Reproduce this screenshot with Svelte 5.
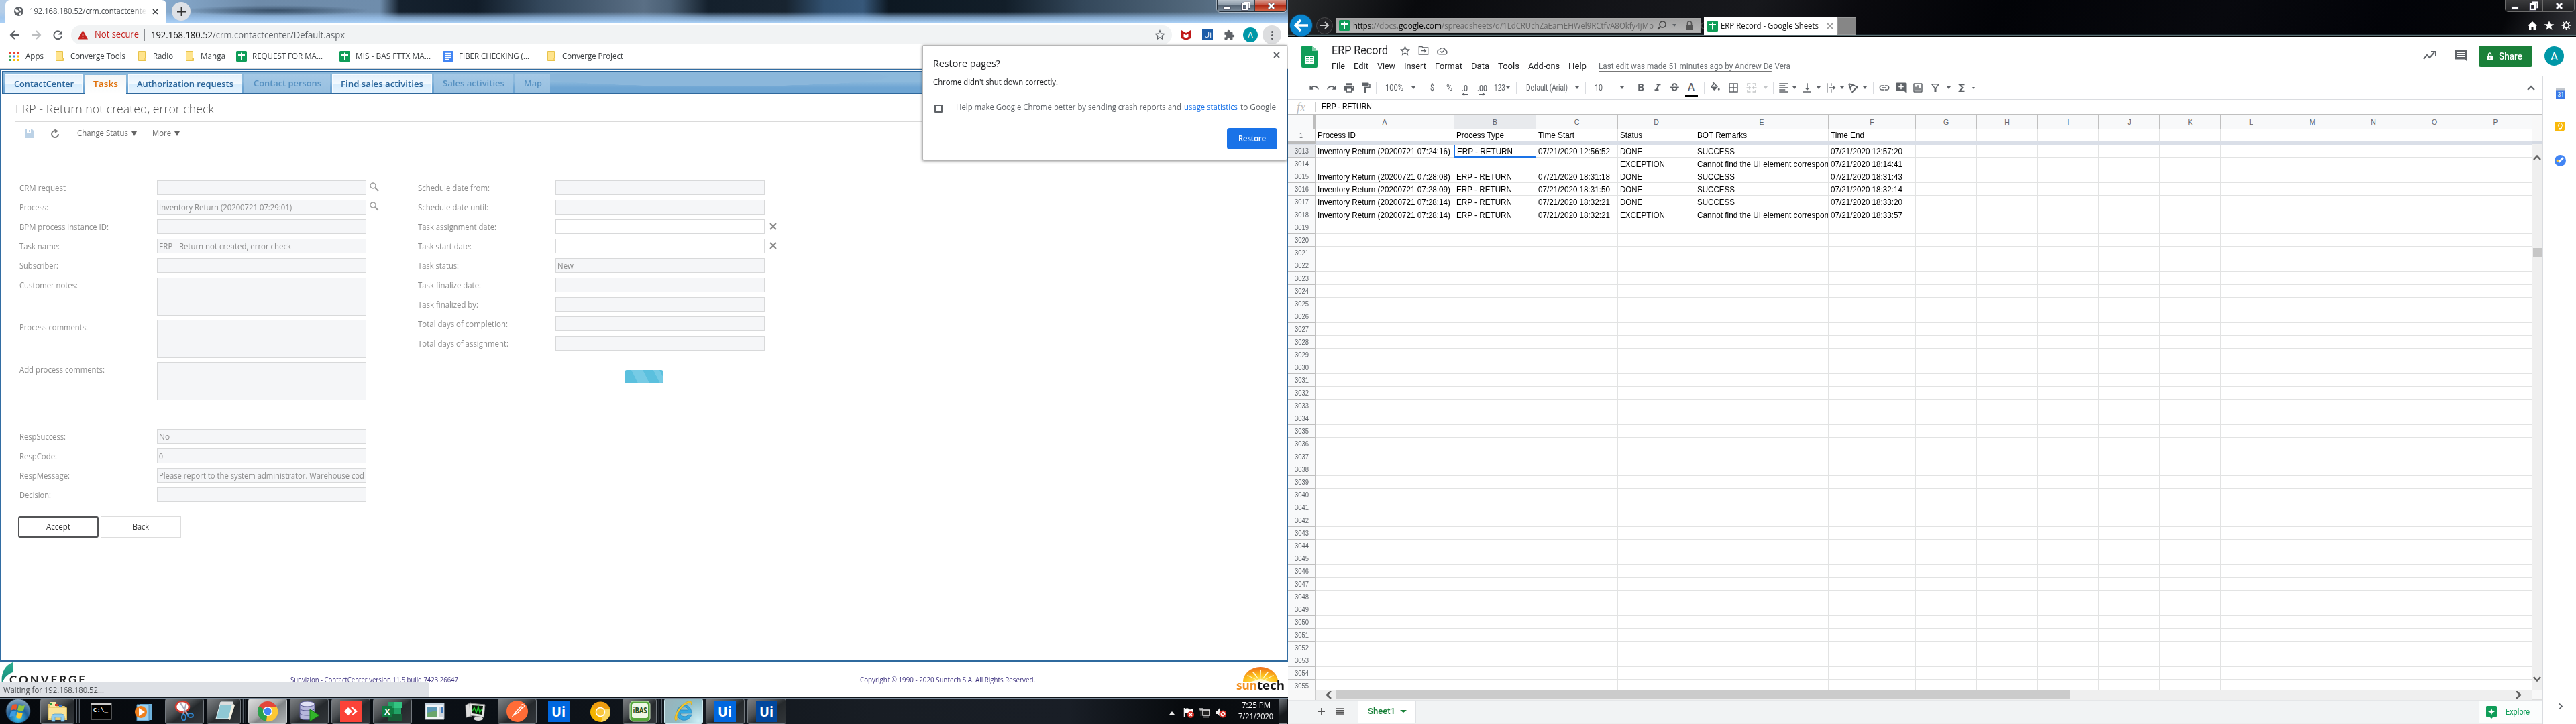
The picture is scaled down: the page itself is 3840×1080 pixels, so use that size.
<script>
  // Condenses or widens a line of text to the given width.
  function fit(node, w) {
    if (!w) return;
    const natural = node.getBoundingClientRect().width;
    node.style.transform = `scaleX(${w / natural})`;
    node.style.width = `${w}px`;
  }

  const bookmarks = [
    { kind: 'apps', name: 'Apps', w: 27, cell: 69 },
    { kind: 'folder', name: 'Converge Tools', w: 82, cell: 123 },
    { kind: 'folder', name: 'Radio', w: 30, cell: 71 },
    { kind: 'folder', name: 'Manga', w: 37, cell: 75 },
    { kind: 'gsheet', name: 'REQUEST FOR MA...', w: 105, cell: 154 },
    { kind: 'gsheet', name: 'MIS - BAS FTTX MA...', w: 112, cell: 154 },
    { kind: 'gdoc', name: 'FIBER CHECKING (...', w: 105, cell: 156 },
    { kind: 'folder', name: 'Converge Project', w: 91, cell: 130 }
  ];

  const tabs = [
    { name: 'ContactCenter', w: 116, t: 89, state: 'on' },
    { name: 'Tasks', w: 62, t: 37, state: 'current' },
    { name: 'Authorization requests', w: 170, t: 144, state: 'on' },
    { name: 'Contact persons', w: 128, t: 101, state: 'off' },
    { name: 'Find sales activities', w: 149, t: 123, state: 'on' },
    { name: 'Sales activities', w: 118, t: 92, state: 'off' },
    { name: 'Map', w: 52, t: 27, state: 'off' }
  ];

  const leftFields = [
    { label: 'CRM request', w: 69, find: true },
    { label: 'Process:', w: 43, value: 'Inventory Return (20200721 07:29:01)', vw: 198, find: true },
    { label: 'BPM process instance ID:', w: 133 },
    { label: 'Task name:', w: 60, value: 'ERP - Return not created, error check', vw: 197 },
    { label: 'Subscriber:', w: 58 },
    { label: 'Customer notes:', w: 87, tall: true },
    { label: 'Process comments:', w: 102, tall: true },
    { label: 'Add process comments:', w: 127, tall: true }
  ];
  const rightFields = [
    { label: 'Schedule date from:', w: 107 },
    { label: 'Schedule date until:', w: 105 },
    { label: 'Task assignment date:', w: 117, edit: true },
    { label: 'Task start date:', w: 80, edit: true },
    { label: 'Task status:', w: 61, value: 'New', vw: 24 },
    { label: 'Task finalize date:', w: 94 },
    { label: 'Task finalized by:', w: 90 },
    { label: 'Total days of completion:', w: 134 },
    { label: 'Total days of assignment:', w: 135 }
  ];
  const respFields = [
    { label: 'RespSuccess:', w: 69, value: 'No', vw: 16 },
    { label: 'RespCode:', w: 56, value: '0', vw: 6 },
    { label: 'RespMessage:', w: 75, value: 'Please report to the system administrator. Warehouse cod', vw: 306 },
    { label: 'Decision:', w: 47 }
  ];

  const apps = [
    ['explorer', 'stack'], ['cmd', ''], ['media', ''], ['snip', 'open'], ['notepad', 'stack'],
    ['chrome', 'lit'], ['db', 'open'], ['anydesk', 'open'], ['excel', 'open'], ['panel', ''],
    ['monitor', ''], ['postman', 'open'], ['ui', ''], ['canary', ''], ['ibas', 'stack'],
    ['ie', 'active'], ['ui', 'open'], ['uidark', 'open']
  ];

  const menus = [
    ['File', 20, 33], ['Edit', 22, 35], ['View', 27, 40], ['Insert', 33, 46], ['Format', 41, 54],
    ['Data', 27, 40], ['Tools', 32, 45], ['Add-ons', 47, 60], ['Help', 27, 45]
  ];

  const tools = [
    ['undo', 26], ['redo', 26], ['print', 25], ['paint', 25], ['|', 6], ['100%', 48, 27], ['v', 10],
    ['|', 12], ['$', 22, 6], ['%', 28, 9], ['.0', 18, 9], ['.00', 34, 15], ['123', 18, 17], ['v', 8],
    ['|', 16], ['Default (Arial)', 76, 62], ['v', 14], ['|', 10], ['10', 30, 12], ['v', 40],
    ['bold', 16], ['italic', 34], ['strike', 16], ['color', 34], ['|', 4], ['fill', 30],
    ['borders', 24], ['merge', 30], ['vlight', 12], ['|', 10], ['align', 22], ['v', 10],
    ['valign', 28], ['v', 6], ['wrap', 30], ['v', 4], ['rotate', 28], ['v', 8], ['|', 16],
    ['link', 18], ['comment', 32], ['chart', 18], ['filter', 34], ['v', 6], ['sigma', 32], ['vs', 4]
  ];
  const paths = {
    undo: 'M12.5 8c-2.65 0-5.05.99-6.9 2.6L2 7v9h9l-3.62-3.62c1.39-1.16 3.16-1.88 5.12-1.88 3.54 0 6.55 2.31 7.6 5.5l2.37-.78C21.08 11.03 17.15 8 12.5 8z',
    redo: 'M18.4 10.6C16.55 8.99 14.15 8 11.5 8c-4.65 0-8.58 3.03-9.96 7.22L3.9 16c1.05-3.19 4.05-5.5 7.6-5.5 1.95 0 3.73.72 5.12 1.88L13 16h9V7l-3.6 3.6z',
    print: 'M19 8H5c-1.66 0-3 1.34-3 3v6h4v4h12v-4h4v-6c0-1.66-1.34-3-3-3zm-3 11H8v-5h8v5zm3-7c-.55 0-1-.45-1-1s.45-1 1-1 1 .45 1 1-.45 1-1 1zm-1-9H6v4h12V3z',
    paint: 'M18 4V3c0-.55-.45-1-1-1H5c-.55 0-1 .45-1 1v4c0 .55.45 1 1 1h12c.55 0 1-.45 1-1V6h1v4H9v11c0 .55.45 1 1 1h2c.55 0 1-.45 1-1v-9h8V4h-3z',
    bold: 'M15.6 10.79c.97-.67 1.65-1.77 1.65-2.79 0-2.26-1.75-4-4-4H7v14h7.04c2.09 0 3.71-1.7 3.71-3.79 0-1.52-.86-2.82-2.15-3.42zM10 6.5h3c.83 0 1.5.67 1.5 1.5s-.67 1.5-1.5 1.5h-3v-3zm3.5 9H10v-3h3.5c.83 0 1.5.67 1.5 1.5s-.67 1.5-1.5 1.5z',
    italic: 'M10 4v3h2.21l-3.42 8H6v3h8v-3h-2.21l3.42-8H18V4z',
    strike: 'M7.24 8.75c-.26-.48-.39-1.03-.39-1.67 0-.61.13-1.16.4-1.67.26-.5.63-.93 1.11-1.29.48-.35 1.05-.63 1.7-.83.66-.19 1.39-.29 2.18-.29.81 0 1.54.11 2.21.34.66.22 1.23.54 1.69.94.47.4.83.88 1.08 1.43s.38 1.15.38 1.81h-3.01c0-.31-.05-.59-.15-.85-.09-.27-.24-.49-.44-.68-.2-.19-.45-.33-.75-.44-.3-.1-.66-.16-1.06-.16-.39 0-.74.04-1.03.13s-.53.21-.72.36c-.19.16-.34.34-.44.55-.1.21-.15.43-.15.66 0 .48.25.88.74 1.21.38.25.77.48 1.41.7H7.39c-.05-.08-.11-.17-.15-.25zM21 12v-2H3v2h9.62c.18.07.4.14.55.2.37.17.66.34.87.51s.35.36.43.57c.07.2.11.43.11.69 0 .23-.05.45-.14.66-.09.2-.23.38-.42.53-.19.15-.42.26-.71.35-.29.08-.63.13-1.01.13-.43 0-.83-.04-1.18-.13s-.66-.23-.91-.42c-.25-.19-.45-.44-.59-.75s-.25-.76-.25-1.21H6.4c0 .55.08 1.13.24 1.58s.37.85.65 1.21c.28.35.6.66.98.92.37.26.78.48 1.22.65.44.17.9.3 1.38.39.48.08.96.13 1.44.13.8 0 1.53-.09 2.18-.28s1.21-.45 1.67-.79c.46-.34.82-.77 1.07-1.27s.38-1.07.38-1.71c0-.6-.1-1.14-.31-1.61-.05-.11-.11-.23-.17-.33H21z',
    fill: 'M16.56 8.94L7.62 0 6.21 1.41l2.38 2.38-5.15 5.15c-.59.59-.59 1.54 0 2.12l5.5 5.5c.29.29.68.44 1.06.44s.77-.15 1.06-.44l5.5-5.5c.59-.58.59-1.53 0-2.12zM5.21 10L10 5.21 14.79 10H5.21zM19 11.5s-2 2.17-2 3.5c0 1.1.9 2 2 2s2-.9 2-2c0-1.33-2-3.5-2-3.5z',
    borders: 'M3 3v18h18V3H3zm8 16H5v-6h6v6zm0-8H5V5h6v6zm8 8h-6v-6h6v6zm0-8h-6V5h6v6z',
    merge: 'M3 3h7v2H5v3H3zM14 3h7v5h-2V5h-5zM3 16h2v3h5v2H3zM19 16h2v5h-7v-2h5zM2 11h5V8l4 4-4 4v-3H2zM22 11h-5V8l-4 4 4 4v-3h5z',
    align: 'M15 15H3v2h12v-2zm0-8H3v2h12V7zM3 13h18v-2H3v2zm0 8h18v-2H3v2zM3 3v2h18V3H3z',
    valign: 'M16 13h-3V3h-2v10H8l4 4 4-4zM4 19v2h16v-2H4z',
    wrap: 'M4 3h2v18H4zM12 3h2v6h-2zM12 15h2v6h-2zM8 11h9V8l5 4-5 4v-3H8z',
    rotate: 'M3 5l2-2 12 4-2 2-3-1-4 4 1 3-2 2zM6 6l1.500 4 2.500-2.600zM9 20L18 11l-2-2h6v6l-2-2-9 9z',
    link: 'M3.900 12c0-1.710 1.390-3.100 3.100-3.100h4V7H7c-2.760 0-5 2.240-5 5s2.240 5 5 5h4v-1.900H7c-1.710 0-3.100-1.390-3.100-3.100zM8 13h8v-2H8v2zm9-6h-4v1.900h4c1.710 0 3.100 1.390 3.100 3.100s-1.390 3.100-3.100 3.100h-4V17h4c2.760 0 5-2.240 5-5s-2.240-5-5-5z',
    comment: 'M22 4c0-1.100-.9-2-2-2H4c-1.100 0-2 .9-2 2v12c0 1.100.9 2 2 2h14l4 4V4zm-5 7h-4v4h-2v-4H7V9h4V5h2v4h4v2z',
    chart: 'M19 3H5c-1.100 0-2 .9-2 2v14c0 1.100.9 2 2 2h14c1.100 0 2-.9 2-2V5c0-1.100-.9-2-2-2zm0 16H5V5h14v14zM7 10h2v7H7zM11 7h2v10h-2zM15 13h2v4h-2z',
    filter: 'M3 4h18l-7 9v7h-4v-7zM7 6l5 6.500 5-6.500z',
    sigma: 'M18 4H6v2l6.500 6L6 18v2h12v-3h-7l5-5-5-5h7z'
  };

  const cols = 'ABCDEFGHIJKLMNOP'.split('');
  const head = [['Process ID', 57], ['Process Type', 71], ['Time Start', 54], ['Status', 33], ['BOT Remarks', 74], ['Time End', 50]];
  const id = (s) => [`Inventory Return (20200721 ${s})`, 198];
  const erp = ['ERP - RETURN', 83];
  const at = (s) => [`07/21/2020 ${s}`, 107];
  const done = ['DONE', 33];
  const exc = ['EXCEPTION', 67];
  const ok = ['SUCCESS', 56];
  const miss = ['Cannot find the UI element correspon', 196];
  const data = [
    [id('07:24:16'), erp, at('12:56:52'), done, ok, at('12:57:20')],
    [null, null, null, exc, miss, at('18:14:41')],
    [id('07:28:08'), erp, at('18:31:18'), done, ok, at('18:31:43')],
    [id('07:28:09'), erp, at('18:31:50'), done, ok, at('18:32:14')],
    [id('07:28:14'), erp, at('18:32:21'), done, ok, at('18:33:20')],
    [id('07:28:14'), erp, at('18:32:21'), exc, miss, at('18:33:57')]
  ];
  const rows = Array.from({ length: 43 }, (_, i) => ({ n: 3013 + i, cells: data[i] ?? [] }));
</script>

{#snippet t(text, w, cls = '')}<span class="t {cls}" use:fit={w}>{text}</span>{/snippet}

{#snippet sheetIcon(s)}
  <svg class="ico" width={s} height={s} viewBox="0 0 16 16"><rect width="16" height="16" rx="1.500" fill="#0f9d58" /><path d="M7 2.500h2V5h4v2H9v6.500H7V7H3V5h4z" fill="#fff" /></svg>
{/snippet}

{#snippet windowButtons(dark)}
  <div class="winbtns" class:dark>
    <span><svg width="12" height="14"><rect x="1" y="8" width="10" height="4" fill="#fff" stroke="#445" stroke-width=".8" /></svg></span>
    <span><svg width="14" height="14"><path d="M5 1h8v9h-2M2 4h7v8H2z" fill="none" stroke="#556" stroke-width="3.500" /><path d="M5 1.500h7.500V10M2 4h7v8H2z" fill="none" stroke="#fff" stroke-width="2" /></svg></span>
    <span class="close"><svg width="14" height="14"><path d="M3 3l8 8M11 3l-8 8" stroke="#445" stroke-width="4" /><path d="M3 3l8 8M11 3l-8 8" stroke="#fff" stroke-width="2.600" /></svg></span>
  </div>
{/snippet}

{#snippet field(f)}
  <div class="field" class:tall={f.tall}>
    <div class="label">{@render t(f.label, f.w)}</div>
    <div class="input" class:edit={f.edit}>{#if f.value}{@render t(f.value, f.vw)}{/if}</div>
    {#if f.find}
      <svg class="find" width="14" height="15" viewBox="0 0 14 15"><circle cx="5" cy="5" r="4" fill="none" stroke="#999" stroke-width="1.300" /><path d="M8 8l5 5" stroke="#999" stroke-width="2" /></svg>
    {:else if f.edit}
      <svg class="clear" width="11" height="11" viewBox="0 0 11 11"><path d="M1 1l9 9M10 1l-9 9" stroke="#8a8a8a" stroke-width="2" /></svg>
    {/if}
  </div>
{/snippet}

{#snippet appIcon(k)}
  <svg width="36" height="34" viewBox="0 0 36 34">
    {#if k === 'explorer'}
      <path d="M4 6h8l2 3h14l4 3v18H4z" fill="#e8c768" /><path d="M6 3h9v7H6z" fill="#f6e7a5" /><path d="M7 4h3v3H7z" fill="#2a9d3c" /><path d="M14 6h4v3h-4z" fill="#d43a2a" /><path d="M20 8h4v3h-4z" fill="#3476d0" /><path d="M4 11h27v17H4z" fill="#f9e398" stroke="#d9b850" /><path d="M9 32v-7q0-4 4-4h11q4 0 4 4v7h-5v-6h-9v6z" fill="#8fcdf0" stroke="#4a96c4" stroke-width=".7" />
    {:else if k === 'cmd'}
      <rect x="3" y="5" width="30" height="24" fill="#000" stroke="#999" /><path d="M3 5h30v3H3z" fill="#c9c9c9" /><text x="6" y="18" font-family="Liberation Mono" font-size="9" font-weight="bold" fill="#fff" textLength="22">C:\_</text>
    {:else if k === 'media'}
      <path d="M14 6h18v24H14z" fill="#6db1dc" /><path d="M9 7h18v24H9z" fill="#9ad0ef" stroke="#4b90bf" /><circle cx="15" cy="18" r="9" fill="#ef7f1c" /><path d="M12 12l9 6-9 6z" fill="#fff" />
    {:else if k === 'snip'}
      <ellipse cx="15" cy="10" rx="10" ry="8" fill="#fff" stroke="#d23b30" stroke-width="2.500" /><path d="M11 3l12 19M21 4l-5 18" stroke="#aab" stroke-width="2" /><ellipse cx="17" cy="26" rx="3" ry="4.500" fill="none" stroke="#2f86cf" stroke-width="2" /><ellipse cx="27" cy="23" rx="4" ry="3" fill="none" stroke="#2f86cf" stroke-width="2" />
    {:else if k === 'notepad'}
      <path d="M13 3h18l-6 25H6z" fill="#8fc8d4" stroke="#e8f3f5" /><path d="M13 3h18l-1 4H12z" fill="#ddd" /><path d="M31 5l3 3-7 22-3-2z" fill="#f3efe0" />
    {:else if k === 'chrome'}
      <circle cx="18" cy="17" r="15" fill="#e4463a" /><path d="M18 17L5 9.500A15 15 0 0 0 16 32z" fill="#2ba24c" /><path d="M18 17l-2 15A15 15 0 0 0 32 11H20z" fill="#fcc934" /><circle cx="18" cy="17" r="7" fill="#fff" /><circle cx="18" cy="17" r="5.500" fill="#4285f4" />
    {:else if k === 'db'}
      <path d="M4 6v20c0 5 22 5 22 0V6z" fill="#b7b7dc" stroke="#55558e" /><ellipse cx="15" cy="6" rx="11" ry="4" fill="#e0e0f4" stroke="#55558e" /><path d="M4 13c0 4 22 4 22 0M4 20c0 4 22 4 22 0" fill="none" stroke="#55558e" /><path d="M19 14l14 9-14 9z" fill="#33b52a" stroke="#187a14" />
    {:else if k === 'anydesk'}
      <rect x="2" y="1" width="32" height="32" fill="#fb4338" /><path d="M8 17l6-6 6 6-6 6zM18 11l3 0 7 6-7 6h-3l6-6z" fill="#fff" />
    {:else if k === 'excel'}
      <path d="M11 3h20v28H11z" fill="#21a366" /><path d="M21 3h11v9H21z" fill="#33c481" /><path d="M11 12h10v9H11z" fill="#107c41" /><path d="M11 21h21v10H11z" fill="#185c37" /><rect x="2" y="9" width="16" height="16" rx="1" fill="#107c41" /><text x="6" y="22" font-family="Open Sans" font-weight="bold" font-size="13" fill="#fff">X</text>
    {:else if k === 'panel'}
      <path d="M5 5h28v24H5z" fill="#f2f5f8" stroke="#aeb7c0" /><path d="M5 5h28v3H5z" fill="#c2d0dc" /><path d="M8 11h14v14H8z" fill="#5b97b5" /><path d="M8 19l14-3v9H8z" fill="#6aa56c" /><path d="M25 11h6v14h-6z" fill="#cdd3da" /><path d="M29 11h3v8h-3z" fill="#3a76ba" />
    {:else if k === 'monitor'}
      <path d="M3 8l8-4 2 20-9 2z" fill="#ddd" stroke="#888" /><path d="M9 5l23 2-2 19-20-3z" fill="#e4e4e4" stroke="#888" /><path d="M12 8l17 1-2 13-14-2z" fill="#0a1a0a" /><path d="M13 17l3-6 3 8 3-9 2 9 3-5" fill="none" stroke="#1fc32e" stroke-width="1.500" /><ellipse cx="22" cy="28" rx="7" ry="3" fill="#ddd" />
    {:else if k === 'postman'}
      <circle cx="18" cy="17" r="16" fill="#ff6c37" /><path d="M9 26l6-8 3 2z" fill="#fff" /><path d="M15 19l9-10M18 20l9-10" stroke="#fff" stroke-width="1.300" /><circle cx="26" cy="9" r="2.500" fill="none" stroke="#fff" />
    {:else if k === 'ui' || k === 'uidark'}
      <rect x="2" y="1" width="32" height="32" fill={k === 'ui' ? '#0067df' : '#01479d'} /><text x="7" y="25" font-family="Open Sans" font-weight="bold" font-size="22" textLength="21" lengthAdjust="spacingAndGlyphs" fill="#fff">Ui</text>
    {:else if k === 'canary'}
      <circle cx="18" cy="18" r="15" fill="#f4b400" /><path d="M18 18L5 10A15 15 0 0 1 32 12z" fill="#ee9c0f" /><path d="M24 14h8a15 15 0 0 1-13 19z" fill="#fbd75e" /><circle cx="18" cy="18" r="6.500" fill="#f9c63c" stroke="#fff" stroke-width="1.500" />
    {:else if k === 'ibas'}
      <rect x="3" y="2" width="30" height="30" rx="5" fill="#55a63c" stroke="#cfe8c2" /><rect x="6" y="5" width="24" height="22" rx="3" fill="#eef7e6" /><text x="7.500" y="20" font-family="Open Sans" font-weight="bold" font-size="13" textLength="21" lengthAdjust="spacingAndGlyphs" fill="#1d4f22">iBAS</text>
    {:else if k === 'ie'}
      <path d="M30 20H13c1 6 10 6 12 2h5c-4 12-22 11-22-3S30 3 30 20zM13 15h12c-1-6-11-6-12 0z" fill="#35a8e0" stroke="#1b76b5" stroke-width=".6" /><path d="M6 31C1 26 12 6 25 2c6-1 6 3 4 6 1-4-1-5-5-3C14 10 5 24 9 29z" fill="#f3c62e" stroke="#d19c13" stroke-width=".5" />
    {/if}
  </svg>
{/snippet}

<div class="desktop">
  <section class="left">
    <header class="aero">
      <div class="ctab">
        <svg width="14" height="14" viewBox="0 0 14 14"><circle cx="7" cy="7" r="7" fill="#5f6368" /><path d="M2 4l4 1 1 3-3 1-2-2zM8 2l3 2-1 2-3-1zM8 9l3-1-1 4-2 0z" fill="#fff" /></svg>
        <div class="ctitle">{@render t('192.168.180.52/crm.contactcente', 174)}</div>
        <svg width="9" height="9" viewBox="0 0 9 9"><path d="M1 1l7 7M8 1l-7 7" stroke="#3c4043" stroke-width="1.700" /></svg>
      </div>
      <div class="plus"><svg width="13" height="13" viewBox="0 0 13 13"><path d="M6.500 0v13M0 6.500h13" stroke="#333" stroke-width="1.800" /></svg></div>
      <div class="grow"></div>
      {@render windowButtons(false)}
    </header>

    <div class="chromebar">
      <svg width="32" height="18" viewBox="-8 -1 32 18"><path d="M15 8H2M8 2L2 8l6 6" fill="none" stroke="#5f6368" stroke-width="2" /></svg>
      <svg width="32" height="18" viewBox="-8 -1 32 18"><path d="M1 8h13M8 2l6 6-6 6" fill="none" stroke="#bdbfc1" stroke-width="2" /></svg>
      <svg width="32" height="18" viewBox="-8 -1 32 18"><path d="M13 4.500A6 6 0 1 0 14 10" fill="none" stroke="#5f6368" stroke-width="2" /><path d="M15 1v6.500H8.500z" fill="#5f6368" /></svg>
      <div class="omni">
        <svg width="15" height="14" viewBox="0 0 15 14"><path d="M7.500 0L15 13.500H0z" fill="#c5221f" /><path d="M7.500 5v4M7.500 10.300v1.700" stroke="#fff" stroke-width="1.500" /></svg>
        <div class="insecure">{@render t('Not secure', 66)}</div>
        <div class="url">{@render t('192.168.180.52', 92)}{@render t('/crm.contactcenter/Default.aspx', 197, 'dim')}</div>
        <svg width="16" height="16" viewBox="0 0 24 24"><path d="M12 2.500l2.900 6.500 7 .7-5.300 4.700 1.600 7-6.200-3.700-6.200 3.700 1.600-7L2.100 9.700l7-.7z" fill="none" stroke="#5f6368" stroke-width="2" /></svg>
      </div>
      <div class="exts">
        <svg width="14" height="16" viewBox="0 0 14 16"><path d="M0 1l7 4 7-4v12l-7 3-7-3zM3.500 6v5L7 12.500 10.500 11V6L7 8z" fill="#c01818" fill-rule="evenodd" /></svg>
        <div class="uibadge">{@render t('Ui', 11)}</div>
        <svg width="17" height="17" viewBox="0 0 24 24"><path d="M20.500 11H19V7c0-1.100-.9-2-2-2h-4V3.500C13 2.120 11.880 1 10.500 1S8 2.120 8 3.500V5H4c-1.100 0-2 .9-2 2v3.800h1.500c1.500 0 2.700 1.200 2.700 2.700S5 16.200 3.500 16.200H2V20c0 1.100.9 2 2 2h3.800v-1.500c0-1.500 1.200-2.700 2.700-2.700s2.700 1.200 2.700 2.700V22H17c1.100 0 2-.9 2-2v-4h1.500c1.380 0 2.500-1.120 2.500-2.500S21.880 11 20.500 11z" fill="#5f6368" /></svg>
        <div class="avatar sm">A</div>
        <div class="kebab"><i></i><i></i><i></i></div>
      </div>
    </div>

    <nav class="bookmarks">
      {#each bookmarks as b}
        <div class="bm {b.kind}" style="width:{b.cell}px">
          {#if b.kind === 'apps'}
            <svg width="14" height="14" viewBox="0 0 14 14"><path d="M0 0h3v3H0zM5.500 0h3v3h-3zM11 0h3v3h-3z" fill="#ea4335" /><path d="M0 5.500h3v3H0zM0 11h3v3H0z" fill="#34a853" /><path d="M5.500 5.500h3v3h-3z" fill="#4285f4" /><path d="M11 5.500h3v3h-3zM5.500 11h3v3h-3zM11 11h3v3h-3z" fill="#fbbc04" /></svg>
          {:else if b.kind === 'folder'}
            <svg width="12" height="15" viewBox="0 0 12 15"><path d="M.5.500h10v10.500h1v3.500H.5z" fill="#ffe48d" stroke="#e8c34b" /><path d="M9 11h2v3H9z" fill="#f5d063" /></svg>
          {:else if b.kind === 'gsheet'}
            {@render sheetIcon(16)}
          {:else}
            <svg width="16" height="16" viewBox="0 0 16 16"><rect width="16" height="16" rx="1.500" fill="#4285f4" /><path d="M3 3.500h10M3 6.500h10M3 9.500h10M3 12.500h6" stroke="#fff" stroke-width="1.500" /></svg>
          {/if}
          {@render t(b.name, b.w)}
        </div>
      {/each}
    </nav>

    <main class="page">
      <div class="tabbar">
        {#each tabs as tab}
          <div class="ptab {tab.state}" style="width:{tab.w}px">{@render t(tab.name, tab.t)}</div>
        {/each}
      </div>
      <h1>{@render t('ERP - Return not created, error check', 296)}</h1>
      <div class="actions">
        <svg width="13" height="13" viewBox="0 0 13 13"><path d="M0 0h11l2 2v11H0z" fill="#bcd2e6" /><path d="M3 0h6v5H3z" fill="#fff" /><path d="M6 1h2v3H6z" fill="#bcd2e6" /></svg>
        <svg width="14" height="15" viewBox="0 0 14 15"><path d="M9 3.500A5 5 0 1 0 12 8" fill="none" stroke="#808080" stroke-width="2" /><path d="M6 0l6 3.500L7 7z" fill="#808080" /></svg>
        <div>{@render t('Change Status', 76)}<i class="tri"></i></div>
        <div>{@render t('More', 28)}<i class="tri"></i></div>
      </div>
      <div class="form">
        <div class="fcol">{#each leftFields as f}{@render field(f)}{/each}</div>
        <div class="fcol">
          {#each rightFields as f}{@render field(f)}{/each}
          <div class="progress"></div>
        </div>
      </div>
      <div class="resp">{#each respFields as f}{@render field(f)}{/each}</div>
      <div class="buttons">
        <button class="accept">{@render t('Accept', 36)}</button>
        <button>{@render t('Back', 24)}</button>
      </div>
    </main>

    <footer class="pfoot">
      <div class="converge">
        <svg width="18" height="32" viewBox="0 0 18 32"><defs><linearGradient id="cg" x1="0" y1="0" x2="0" y2="1"><stop offset="0" stop-color="#2fae90" /><stop offset="1" stop-color="#0e8b7c" /></linearGradient></defs><path d="M17 0v15C9 18 4 23 1 32-1 18 4 5 17 0z" fill="url(#cg)" /></svg>
        {@render t('CONVERGE', 116)}
      </div>
      <div class="version">{@render t('Sunvizion - ContactCenter version 11.5 build 7423.26647', 250)}</div>
      <div class="copy">{@render t('Copyright © 1990 - 2020 Suntech S.A. All Rights Reserved.', 261)}</div>
      <div class="suntech">
        <svg width="52" height="22" viewBox="0 0 52 22"><defs><radialGradient id="sg" cx=".5" cy="1" r="1"><stop offset="0" stop-color="#fff27a" /><stop offset=".45" stop-color="#fdc01c" /><stop offset="1" stop-color="#ef6a1a" /></radialGradient></defs><path d="M0 22a26 22 0 0 1 52 0z" fill="url(#sg)" /><path d="M26 22L25 5l2 0zM26 22L14 8l2-1zM26 22l12-14-2-1zM26 22L6 13l1-1zM26 22l20-9-1-1zM12 22l14-4 14 4z" fill="#fffbe0" /></svg>
        <div class="stword">{@render t('sun', 31, 'sun')}{@render t('tech', 41)}</div>
      </div>
    </footer>

    <div class="taskbar">
      <div class="start">
        <svg width="38" height="37" viewBox="0 0 38 37"><defs><radialGradient id="orb" cx=".5" cy=".8" r=".8"><stop offset="0" stop-color="#39c6f2" /><stop offset=".5" stop-color="#1c5f9a" /><stop offset="1" stop-color="#8fa9bd" /></radialGradient></defs><circle cx="19" cy="18.500" r="18" fill="url(#orb)" stroke="#24384a" /><path d="M10 10q4-3 8-1l-2 8q-4-2-8 1z" fill="#e8562a" /><path d="M20 9q4 3 9 1l-2 8q-5 2-9-1z" fill="#8cc63e" /><path d="M8 20q4-3 8-1l-2 8q-4-2-8 1z" fill="#3d9be0" /><path d="M18 20q4 3 8 1l-2 8q-4 2-8-1z" fill="#fbc92e" /></svg>
      </div>
      {#each apps as [k, state]}
        <div class="slot"><div class="task {state}">{@render appIcon(k)}</div>{#if state === 'stack'}<i></i><i></i>{/if}</div>
      {/each}
      <div class="grow"></div>
      <div class="tray">
        <svg width="8" height="5"><path d="M4 0l4 5H0z" fill="#e8e8e8" /></svg>
        <svg width="17" height="16" viewBox="0 0 17 16"><path d="M1.500 1v14" stroke="#eee" stroke-width="1.500" /><path d="M3 2q4-2 6 1 2 1 5-1v7H3z" fill="#fff" /><circle cx="11" cy="11" r="5" fill="#d6281e" /><path d="M9 9l4 4M13 9l-4 4" stroke="#fff" stroke-width="1.500" /></svg>
        <svg width="16" height="16" viewBox="0 0 16 16"><path d="M1 1v3h3V1M2.500 4v9" fill="none" stroke="#eee" stroke-width="1.200" /><path d="M5 4h10v8H5z" fill="#222" stroke="#eee" stroke-width="1.500" /><path d="M5 14.500h9" stroke="#eee" stroke-width="1.500" /></svg>
        <svg width="16" height="16" viewBox="0 0 16 16"><path d="M0 5h3l4-5v14l-4-4H0z" fill="#eee" /><circle cx="11" cy="10" r="4.500" fill="#fff" stroke="#d6281e" stroke-width="2" /><path d="M8 7l6 6" stroke="#d6281e" stroke-width="2" /></svg>
      </div>
      <div class="clock"><div>{@render t('7:25 PM', 43)}</div><div>{@render t('7/21/2020', 52)}</div></div>
      <div class="peek"></div>
    </div>

    <div class="status">{@render t('Waiting for 192.168.180.52...', 150)}</div>

    <aside class="restore">
      <svg class="x" width="10" height="10" viewBox="0 0 10 10"><path d="M1 1l8 8M9 1l-8 8" stroke="#5f6368" stroke-width="1.800" /></svg>
      <h2>{@render t('Restore pages?', 100)}</h2>
      <p>{@render t("Chrome didn't shut down correctly.", 186)}</p>
      <div class="help"><i class="box"></i>{@render t('Help make Google Chrome better by sending crash reports and', 336)}{@render t('usage statistics', 80, 'link')}{@render t('to Google', 53)}</div>
      <button>{@render t('Restore', 41)}</button>
    </aside>
  </section>

  <section class="right">
    <header class="iebar">
      <div class="nav">
        <div class="back"><svg width="22" height="18" viewBox="0 0 22 18"><path d="M21 9H3M10 1L2 9l8 8" fill="none" stroke="#fff" stroke-width="3.500" /></svg></div>
        <div class="fwd"><svg width="14" height="12" viewBox="0 0 14 12"><path d="M0 6h12M7 1l5 5-5 5" fill="none" stroke="#c9c9c9" stroke-width="2" /></svg></div>
      </div>
      <div class="addr">
        {@render sheetIcon(16)}
        <div class="ieurl">{@render t('https', 27, 'strong')}{@render t('://docs.', 41)}{@render t('google.com', 64, 'strong')}{@render t('/spreadsheets/d/1LdCRUchZaEamEFiWel9RCtfvA8Okfy4jMp', 316)}</div>
        <svg width="14" height="14" viewBox="0 0 14 14"><circle cx="8.500" cy="5.500" r="4.500" fill="none" stroke="#444" stroke-width="1.500" /><path d="M5 9l-4 4" stroke="#444" stroke-width="2.200" /></svg>
        <i class="dn"></i>
        <svg width="11" height="14" viewBox="0 0 11 14"><path d="M2.500 6V4a3 3 0 0 1 6 0v2" fill="none" stroke="#555" stroke-width="1.600" /><path d="M0 6h11v8H0z" fill="#555" /></svg>
        <svg width="12" height="13" viewBox="0 0 12 13"><path d="M10 4A4.500 4.500 0 1 0 10.500 8" fill="none" stroke="#444" stroke-width="1.700" /><path d="M11.500 0v5.500H6z" fill="#444" /></svg>
      </div>
      <div class="ietab">
        {@render sheetIcon(16)}
        {@render t('ERP Record - Google Sheets', 146)}
        <svg width="8" height="8" viewBox="0 0 8 8"><path d="M0 0l8 8M8 0L0 8" stroke="#999" stroke-width="1.800" /></svg>
      </div>
      <div class="newtab"></div>
      <div class="grow"></div>
      <div class="iert">
        {@render windowButtons(true)}
        <div class="ietools">
          <svg width="14" height="13" viewBox="0 0 14 13"><path d="M7 0l7 6.500h-2V13H8.500V8h-3v5H2V6.500H0z" fill="#fff" /></svg>
          <svg width="16" height="14" viewBox="0 0 20 19"><path d="M10 0l2.500 7H20l-6 4.500 2.200 7.500L10 14.500 3.800 19 6 11.500 0 7h7.500z" fill="#fff" /></svg>
          <svg width="15" height="14" viewBox="0 0 15 15"><circle cx="7.500" cy="7.500" r="4" fill="none" stroke="#fff" stroke-width="2" /><path d="M7.500 0v3M7.500 12v3M0 7.500h3M12 7.500h3M2.200 2.200l2 2M10.800 10.800l2 2M2.200 12.800l2-2M10.800 4.200l2-2" stroke="#fff" stroke-width="1.800" /></svg>
        </div>
      </div>
    </header>

    <div class="shead">
      <svg class="logo" width="24" height="33" viewBox="0 0 24 33"><path d="M2 0h14l8 8v23q0 2-2 2H2q-2 0-2-2V2q0-2 2-2z" fill="#0f9d58" /><path d="M16 0l8 8h-8z" fill="#87ceac" /><path d="M5 15h14v12H5zM7 17v2h4v-2zM13 17v2h4v-2zM7 20.500v1.500h4v-1.500zM13 20.500v1.500h4v-1.500zM7 23.500v1.500h4v-1.500zM13 23.500v1.500h4v-1.500z" fill="#fff" fill-rule="evenodd" /></svg>
      <div class="stitle">
        <div class="name">
          {@render t('ERP Record', 84)}
          <svg width="15" height="15" viewBox="0 0 24 24"><path d="M12 2.500l2.900 6.500 7 .7-5.300 4.700 1.600 7-6.200-3.700-6.200 3.700 1.600-7L2.100 9.700l7-.7z" fill="none" stroke="#5f6368" stroke-width="2" /></svg>
          <svg width="16" height="14" viewBox="0 0 24 20"><path d="M2 2h7l2 2h11v15H2z" fill="none" stroke="#5f6368" stroke-width="2" /><path d="M7 11h9M13 7.500l4 3.500-4 3.500" fill="none" stroke="#5f6368" stroke-width="2" /></svg>
          <svg width="16" height="13" viewBox="0 0 24 19"><path d="M18 17.500H6.500a5 5 0 0 1-.5-10 7 7 0 0 1 13 1.500 4.300 4.300 0 0 1-1 8.500z" fill="none" stroke="#5f6368" stroke-width="2" /><path d="M8 11l3 3 5-5" fill="none" stroke="#5f6368" stroke-width="2" /></svg>
        </div>
        <div class="menus">
          {#each menus as [name, w, cell]}<div style="width:{cell}px">{@render t(name, w)}</div>{/each}
          <div class="lastedit">{@render t('Last edit was made 51 minutes ago by Andrew De Vera', 286)}</div>
        </div>
      </div>
      <div class="grow"></div>
      <svg width="20" height="14" viewBox="0 0 20 14"><path d="M1 12l5-6 4 4 7-8" fill="none" stroke="#5f6368" stroke-width="2" /><path d="M12 1h7v6" fill="none" stroke="#5f6368" stroke-width="2" /></svg>
      <svg class="cmt" width="19" height="18" viewBox="0 0 19 18"><path d="M1.500 0h16Q19 0 19 1.500V18l-3.500-3.500h-14Q0 14.500 0 13V1.500Q0 0 1.500 0zM4 3.500v1.500h11V3.500zM4 6.500V8h11V6.500zM4 9.500V11h11V9.500z" fill="#5f6368" fill-rule="evenodd" /></svg>
      <div class="share"><svg width="9" height="12" viewBox="0 0 9 12"><path d="M2.500 5V3a2 2 0 0 1 4 0v2" fill="none" stroke="#fff" stroke-width="1.300" /><path d="M0 5h9v7H0zM3.700 7.500v2h1.600v-2z" fill="#fff" fill-rule="evenodd" /></svg>{@render t('Share', 35)}</div>
      <div class="avatar">A</div>
    </div>

    <div class="sbody">
      <div class="workbook">
        <div class="tools">
          {#each tools as [k, w, tw]}
            <div class="tool" style="width:{w}px">
              {#if k === '|'}<i class="sep"></i>
              {:else if k === 'v'}<i class="dn"></i>
              {:else if k === 'vlight'}<i class="dn light"></i>
              {:else if k === 'vs'}<i class="dn small"></i>
              {:else if k === 'color'}<div class="acolor">A<i></i></div>
              {:else if paths[k]}<svg class={k} width="18" height="18" viewBox="0 0 24 24"><path d={paths[k]} fill-rule="evenodd" /></svg>
              {:else if k === '.0' || k === '.00'}
                <div class="dec">{@render t(k, tw)}<svg width="9" height="5" viewBox="0 0 9 5"><path d={k === '.0' ? 'M9 2.500H2M4 .5l-2.500 2 2.500 2' : 'M0 2.500h7M5 .5l2.500 2-2.500 2'} fill="none" stroke="#5f6368" stroke-width="1.200" /></svg></div>
              {:else}{@render t(k, tw)}{/if}
            </div>
          {/each}
          <div class="grow"></div>
          <svg class="collapse" width="12" height="8" viewBox="0 0 12 8"><path d="M1 7l5-5 5 5" fill="none" stroke="#5f6368" stroke-width="2" /></svg>
        </div>
        <div class="formula"><em>fx</em><div>{@render t('ERP - RETURN', 75)}</div></div>
        <div class="gridwrap">
          <div class="grid">
            <div class="row hdr"><div class="rh"></div>{#each cols as c}<div class="cell" class:sel={c === 'B'}>{c}</div>{/each}<div class="cell"></div></div>
            <div class="row one"><div class="rh">{@render t('1', 5)}</div>{#each cols as c, i}<div class="cell">{#if head[i]}{@render t(head[i][0], head[i][1])}{/if}</div>{/each}<div class="cell"></div></div>
            <div class="freeze"><i></i></div>
            {#each rows as r, ri}
              <div class="row">
                <div class="rh" class:sel={ri === 0}>{@render t(r.n, 21)}</div>
                {#each cols as c, i}
                  <div class="cell" class:picked={ri === 0 && i === 1}>{#if r.cells[i]}{@render t(r.cells[i][0], r.cells[i][1])}{/if}</div>
                {/each}
                <div class="cell"></div>
              </div>
            {/each}
          </div>
          <div class="vscroll">
            <div class="vtop"></div><div class="vfreeze"></div>
            <svg width="12" height="9" viewBox="0 0 12 9"><path d="M1 8l5-5.500L11 8" fill="none" stroke="#606060" stroke-width="2.500" /></svg>
            <div class="vthumb"></div>
            <svg class="down" width="12" height="9" viewBox="0 0 12 9"><path d="M1 1l5 5.500L11 1" fill="none" stroke="#606060" stroke-width="2.500" /></svg>
          </div>
        </div>
        <div class="hscroll">
          <div class="corner"></div>
          <svg width="9" height="11" viewBox="0 0 9 11"><path d="M8 0L2 5.500 8 11" fill="none" stroke="#606060" stroke-width="2.500" /></svg>
          <div class="hthumb"></div>
          <div class="grow"></div>
          <svg width="9" height="11" viewBox="0 0 9 11"><path d="M1 0l6 5.500L1 11" fill="none" stroke="#606060" stroke-width="2.500" /></svg>
          <div class="corner2"></div>
        </div>
        <div class="sheettabs">
          <svg width="10" height="10" viewBox="0 0 10 10"><path d="M5 0v10M0 5h10" stroke="#555" stroke-width="1.800" /></svg>
          <svg width="12" height="10" viewBox="0 0 12 10"><path d="M0 1h12M0 3.700h12M0 6.300h12M0 9h12" stroke="#555" stroke-width="1.500" /></svg>
          <div class="stab">{@render t('Sheet1', 41)}<i class="dn green"></i></div>
          <div class="grow"></div>
          <div class="explore">
            <svg width="16" height="19" viewBox="0 0 16 19"><path d="M1.500 0h13Q16 0 16 1.500V15q0 1.500-1.500 1.500H10.500L8 19l-2.500-2.500h-4Q0 16.500 0 15V1.500Q0 0 1.500 0z" fill="#0f9d58" /><path d="M8 3.500l1.400 3.600L13 8.500 9.400 9.900 8 13.500 6.600 9.900 3 8.500l3.600-1.400z" fill="#fff" /></svg>
            {@render t('Explore', 36)}
          </div>
        </div>
      </div>
      <aside class="side">
        <svg width="14" height="15" viewBox="0 0 14 15"><path d="M0 0h14v4H0z" fill="#c3c8ce" /><path d="M0 2.500h14V15H0z" fill="#3b78e7" /><text x="2.500" y="12" font-family="Roboto" font-size="8.500" fill="#fff">31</text></svg>
        <svg width="15" height="14" viewBox="0 0 15 14"><path d="M0 0h15v10.500L12 14H0z" fill="#f9b90b" /><path d="M5.500 7.500a3 3.300 0 1 1 4 0v2h-4zM6 11h3" fill="none" stroke="#fff" /></svg>
        <svg width="17" height="17" viewBox="0 0 17 17"><circle cx="8.500" cy="8.500" r="8.500" fill="#4285f4" /><path d="M6 11l7-7" stroke="#fff" stroke-width="2.600" /><circle cx="4.500" cy="8.500" r="1.800" fill="#fbc02d" /></svg>
        <div class="grow"></div>
        <svg class="more" width="6" height="9" viewBox="0 0 6 9"><path d="M1 .5l4 4-4 4" fill="none" stroke="#5f6368" stroke-width="1.700" /></svg>
      </aside>
    </div>
  </section>
</div>

<style>
  :global(body) { background: #fff; overflow: hidden; }
  * { box-sizing: border-box; }
  .desktop { display: grid; grid-template-columns: 1920px 1920px; width: 3840px; height: 1080px; overflow: hidden; font: 12px/16px 'Open Sans', 'Noto Sans', sans-serif; color: #333; }
  svg { display: block; flex: none; }
  .t { display: inline-block; white-space: nowrap; transform-origin: 0 50%; flex: none; }
  .grow { flex: 1; }
  .left { position: relative; display: grid; grid-template-rows: 34px 34px 35px 884px 53px 40px; height: 1080px; background: #fff; overflow: hidden; }

  .aero { display: flex; background: radial-gradient(ellipse 140px 8px at 410px 16px, rgba(42, 64, 87, .8), transparent), linear-gradient(transparent 52%, rgba(157, 197, 239, .75) 78%, #a9cff5), linear-gradient(90deg, #b5cee8 0, #86a9cc 13%, #6e8ba9 20%, #6f8dac 29.500%, #15212e 31%, #111c28 37%, #33475b 42%, #5a6f85 50%, #4b6075 52%, #14202c 55%, #182430 61%, #31506f 64%, #37587a 67%, #0d1822 69%, #121e29 78%, #33475a 84%, #53697d 93%, #6e8aa6 100%); }
  .ctab { width: 240px; margin-left: 8px; background: #fff; border-radius: 7px 7px 0 0; display: flex; align-items: center; padding-left: 13px; gap: 9px; }
  .ctitle { width: 174px; height: 17px; color: #45494d; mask: linear-gradient(90deg, #000 88%, transparent); }
  .plus { width: 28px; height: 28px; margin: 3px 0 0 8px; border-radius: 50%; background: #dee1e6; display: grid; place-items: center; }
  .winbtns { display: grid; grid-template-columns: 28px 28px 48px; width: 104px; height: 18px; margin-right: 2px; border: 1px solid #26303a; border-top: 0; border-radius: 0 0 5px 5px; overflow: hidden; box-shadow: 0 0 0 1px rgba(255, 255, 255, .45); background: linear-gradient(#b9c3cd, #8b99a7 45%, #586776 50%, #7d8c9b); }
  .winbtns span { display: grid; place-items: center; border-right: 1px solid #39434e; }
  .winbtns .close { background: linear-gradient(#d79a8e, #c4513e 45%, #b02b16 50%, #d8694a); border: 0; }
  .winbtns.dark, .winbtns.dark .close { background: linear-gradient(#3b3b3d, #202123); }
  .winbtns.dark { border-color: #6b6b6b; box-shadow: none; }
  .winbtns.dark span { border-color: #6b6b6b; }

  .chromebar { display: flex; align-items: center; padding: 2px 0 0 6px; }
  .omni { width: 1641px; height: 28px; margin-left: 4px; padding: 0 10px; border-radius: 14px; background: #f1f3f4; display: flex; align-items: center; font-size: 14px; flex: none; }
  .insecure { width: 75px; height: 18px; margin-left: 10px; border-right: 1px solid #8a8d91; color: #c5221f; }
  .url { display: flex; flex: 1; padding-left: 9px; color: #111; }
  .dim { color: #5f6368; }
  .exts { display: grid; grid-template-columns: repeat(5, 32px); place-items: center; margin-left: 5px; }
  .uibadge { width: 16px; height: 16px; background: #1c5ca8; color: #fff; display: grid; place-items: center; line-height: 14px; }
  .avatar { width: 29px; height: 29px; border-radius: 50%; background: #0097a7; color: #fff; display: grid; place-items: center; font: 17px/20px Roboto, sans-serif; }
  .avatar.sm { width: 22px; height: 22px; font-size: 12px; }
  .kebab { width: 28px; height: 28px; border-radius: 50%; background: #dcdddf; display: flex; flex-direction: column; align-items: center; justify-content: center; gap: 2px; }
  .kebab i { width: 3px; height: 3px; border-radius: 50%; background: #55585c; }
  .bookmarks { display: flex; align-items: center; padding: 0 0 3px 14px; border-bottom: 1px solid #d4d5d7; }
  .bm { display: flex; align-items: center; gap: 10px; color: #3c4043; }
  .bm.gsheet, .bm.gdoc { gap: 8px; }

  .page { display: flex; flex-direction: column; border: 1px solid #326da3; border-bottom: 2px solid #2f6a9e; }
  .tabbar { display: flex; align-items: flex-end; gap: 3px; height: 34px; margin: 2px 0 0 2px; padding-left: 3px; border: 1px solid #2f689c; border-right: 0; background: radial-gradient(ellipse 260px 14px at 1060px 8px, #8bb7db 98%, transparent 100%), linear-gradient(#8cb9dc 45%, #6ea5d3 75%); }
  .ptab { height: 28px; display: grid; place-items: center; font-weight: 600; font-size: 12px; }
  .ptab.on { color: #2b659a; background: linear-gradient(#e4f0fb, #f3faff 50%, #d8edfd 52%, #e6f4ff); border: 1px solid #f7fbff; border-bottom: 0; }
  .ptab.current { color: #e0700b; background: linear-gradient(#f4f6f7, #fff); margin-bottom: -1px; }
  .ptab.off { color: #5590c1; background: linear-gradient(#a4c8e5, #96bfe0); }
  h1 { margin: 0 0 0 22px; height: 42px; padding-top: 11px; font: 300 17.500px/22px 'Open Sans', sans-serif; color: #555; border-bottom: 1px solid #dadada; }
  .actions { display: grid; grid-template-columns: 38px 40px 112px 60px; align-items: center; height: 35px; margin-left: 22px; padding: 0 0 0 14px; border-bottom: 1px solid #dadada; color: #666; }
  .actions div { display: flex; align-items: center; gap: 5px; }
  .tri { border: 4px solid transparent; border-top: 7px solid #666; border-bottom: 0; }
  .form { display: grid; grid-template-columns: 594px 600px; margin: 52px 0 0 28px; height: 371px; color: #8c8c8c; }
  .field { display: grid; grid-template-columns: 205px 312px 30px; height: 22px; margin-bottom: 7px; }
  .field.tall { height: 57px; margin-bottom: 6px; }
  .label { padding-top: 4px; }
  .input { border: 1px solid #d8d9da; background: #f5f6f8; padding: 3px 0 0 2px; overflow: hidden; }
  .input.edit { background: #fff; }
  .find { margin: 3px 0 0 5px; }
  .clear { margin: 5px 0 0 7px; }
  .progress { width: 56px; height: 20px; margin: 29px 0 0 309px; border-radius: 2px; border-bottom: 1px solid #3f9fc0; background: linear-gradient(63deg, #5bc0de 28%, #76cbe5 29% 54%, #5bc0de 55% 78%, #76cbe5 79% 92%, #5bc0de 93%); }
  .resp { margin-left: 28px; color: #8c8c8c; }
  .buttons { display: flex; gap: 3px; margin: 14px 0 0 26px; }
  button { width: 120px; height: 32px; padding: 0; border: 1px solid #ddd; background: #fff; font: 12px/16px 'Open Sans', sans-serif; color: #333; }
  .accept { border: 2px solid #535456; border-radius: 3px; }

  .pfoot { display: grid; grid-template-columns: 433px 849px 561px 77px; color: #3f3480; font-size: 11px; }
  .converge { display: flex; align-items: flex-start; padding: 1px 0 0 2px; }
  .converge .t { margin: 14px 0 0 -6px; font: 700 17px/24px Lato, sans-serif; letter-spacing: 3px; color: #222; }
  .version, .copy { padding-top: 19px; }
  .suntech { padding-top: 8px; }
  .suntech svg { margin-left: 10px; }
  .stword { display: flex; font: 700 18.500px/17px 'Open Sans', sans-serif; color: #151515; margin-top: -4px; }
  .sun { color: #f39223; }

  .taskbar { display: flex; border-top: 1px solid #10151a; background: linear-gradient(#7b8a9a 0 1px, transparent 2px 8%), linear-gradient(90deg, #06090d, #0b1016 40%, #181d24 68%, #191e26 83%, #070a0d 92%, #0c0f13); }
  .start { width: 60px; padding: 1px 0 0 8px; }
  .slot { width: 62px; display: flex; align-items: center; gap: 2px; }
  .slot > i { width: 2px; height: 36px; border-right: 1px solid #59616a; background: #20262c; }
  .task { width: 58px; height: 38px; display: grid; place-items: center; border-radius: 3px; border: 1px solid transparent; }
  .stack { width: 51px; }
  .task.open, .task.stack { border-color: #73797f; background: linear-gradient(145deg, #7b7e81, #4b4f52 38%, #25292c 55%, #32363a); }
  .task.lit { border-color: #c9ccce; background: linear-gradient(145deg, #dcdcdc, #a8aaab 45%, #808486 55%, #b0b4b6); }
  .task.active { border-color: #cdeaf0; background: radial-gradient(circle at 90% 90%, #cdeef5, #8fbcc6 50%, #9ab2b8); }
  .tray { display: grid; grid-template-columns: 21px 24px 24px 30px; align-items: center; width: 99px; padding-top: 5px; }
  .clock { width: 60px; padding-top: 2px; color: #fff; line-height: 17px; }
  .clock div { display: flex; justify-content: center; }
  .peek { width: 13px; margin: 1px 1px 0 4px; border: 1px solid #81878d; background: linear-gradient(145deg, #6a6f74, #16191c 60%); }

  .status { position: absolute; left: 0; top: 1018px; width: 640px; height: 22px; padding: 4px 0 0 5px; background: #dee1e6; border-top-right-radius: 4px; color: #4a4d51; }
  .restore { position: absolute; left: 1375px; top: 67px; width: 544px; height: 172px; background: #fff; border: 1px solid #b7b7b7; border-radius: 2px; box-shadow: 0 1px 4px rgba(0, 0, 0, .5); padding: 15px 14px 15px 15px; }
  .restore .x { position: absolute; right: 10px; top: 9px; }
  h2 { margin: 0; font: 15px/22px 'Open Sans', sans-serif; color: #202124; }
  .restore p { margin: 10px 0 0; color: #202124; }
  .help { display: flex; align-items: center; gap: 4px; margin-top: 21px; color: #5f6368; }
  .box { width: 12px; height: 12px; margin: 3px 16px 0 2px; border: 2px solid #5f6368; border-radius: 1px; }
  .link { color: #1a73e8; }
  .restore button { display: block; margin: 23px 0 0 auto; width: 75px; border: 0; border-radius: 4px; background: #1a73e8; color: #fff; font-weight: 600; }

  .right { display: grid; grid-template-rows: 55px 58px 967px; height: 1080px; background: #fff; overflow: hidden; }
  .iebar { display: flex; align-items: flex-end; border-bottom: 1px solid #000; background: linear-gradient(transparent 51px, #2c4247 52px, #87999c 53px, #1c2224 54px), linear-gradient(115deg, #26282a 0, #090a0d 10%, #131418 24%, #17181c 36%, #0a0a0e 44%, #020307 55%, #08090e 72%, #020308 85%, #050609 94%, #34353a 100%); }
  .nav { width: 72px; height: 34px; display: flex; align-items: center; padding-left: 2px; gap: 5px; margin-bottom: -1px; }
  .back { width: 35px; height: 34px; border-radius: 50%; background: #0a86cf; border: 1px solid #19384e; display: grid; place-items: center; }
  .fwd { width: 25px; height: 25px; border-radius: 50%; border: 1px solid #4a4a4c; background: #242427; display: grid; place-items: center; }
  .addr { width: 543px; height: 22px; margin-bottom: 5px; padding-left: 3px; display: flex; align-items: center; gap: 5px; background: linear-gradient(#a1a1a1, #b5b5b5); border: 1px solid #a8a8a8; font-size: 13px; }
  .addr > svg:last-child { margin-left: 5px; }
  .addr .dn { margin: 0 9px 0 4px; }
  .ieurl { display: flex; width: 449px; color: #666; }
  .strong { color: #000; }
  .ietab { width: 198px; height: 26px; margin: 0 1px 2px 5px; padding-left: 5px; display: flex; align-items: center; gap: 4px; background: #fff; color: #111; }
  .ietab svg:last-child { margin-left: 9px; }
  .newtab { width: 28px; height: 26px; margin-bottom: 2px; background: #868686; border: 1px solid #9a9a9a; }
  .iert { width: 106px; height: 54px; }
  .ietools { display: flex; gap: 10px; align-items: center; margin: 13px 0 0 34px; }

  .shead { display: flex; padding: 12px 0 0 20px; align-items: flex-start; font-family: Roboto, sans-serif; color: #202124; }
  .stitle { padding-left: 21px; }
  .name { display: flex; align-items: center; gap: 12px; height: 16px; font-size: 18px; }
  .name svg:nth-of-type(1) { margin-left: 6px; }
  .menus { display: flex; margin-top: 8px; font-size: 13px; }
  .lastedit { color: #6d7175; }
  .lastedit .t { border-bottom: 1px solid #777; line-height: 14px; }
  .shead > svg { margin-top: 9px; }
  .shead > svg.logo { margin-top: 1px; }
  .shead > .cmt { margin: 7px 17px 0 27px; }
  .share { width: 80px; height: 32px; margin: 1px 18px 0 0; padding-left: 12px; display: flex; align-items: center; gap: 9px; background: #1a8039; color: #fff; font-weight: 500; font-size: 14px; border-radius: 3px; }
  .shead .avatar { margin: 2px 18px 0 0; }

  .sbody { display: grid; grid-template-columns: 1870px 50px; font-family: 'Liberation Sans', sans-serif; }
  .workbook { display: grid; grid-template-rows: 35px 22px 858px 15px 36px; border-top: 1px solid #dadce0; }
  .side { border-left: 1px solid #dadce0; border-top: 1px solid transparent; display: flex; flex-direction: column; align-items: center; padding: 18px 0 22px 2px; gap: 35px; }
  .tools { display: flex; align-items: center; padding-left: 26px; border-bottom: 1px solid #dadce0; font: 12px/16px Roboto, sans-serif; color: #5f6368; }
  .tool { height: 100%; flex: none; display: flex; align-items: center; justify-content: center; fill: #5f6368; }
  .tool .merge { fill: #c4c6c8; }
  .tool .undo, .tool .redo { width: 16px; height: 16px; }
  .sep { width: 1px; height: 18px; background: #dadce0; }
  .dn { flex: none; border: 3.500px solid transparent; border-top: 4px solid #5f6368; border-bottom: 0; }
  .dn.light { border-top-color: #c4c6c8; }
  .dn.small { border-width: 3px 2.500px 0; }
  .dn.green { border-top-color: #188038; border-left-width: 5px; border-right-width: 5px; }
  .acolor { display: flex; flex-direction: column; align-items: center; font: 500 15px/17px Roboto, sans-serif; padding-top: 5px; }
  .acolor i { width: 19px; height: 4px; background: #000; margin-top: 2px; }
  .dec { display: flex; flex-direction: column; align-items: center; font-weight: 500; padding-top: 5px; }
  .dec svg { margin-top: -2px; }
  .collapse { margin-right: 11px; }
  .formula { display: grid; grid-template-columns: 40px 300px; align-items: center; border-bottom: 1px solid #c0c0c0; font-size: 12px; color: #000; }
  .formula em { font: italic 18px/18px 'Liberation Serif', serif; color: #bbb; padding-left: 13px; }
  .formula div { border-left: 1px solid #ccc; padding-left: 9px; height: 15px; line-height: 15px; }
  .gridwrap { display: grid; grid-template-columns: 1854px 15px; overflow: hidden; font-size: 12px; color: #000; }
  .row { display: grid; grid-template-columns: 41px 207px 122px 122px 115px 199px 130px repeat(10, 91px) 8px; height: 19px; }
  .row > div { border-right: 1px solid #e2e3e3; border-bottom: 1px solid #e2e3e3; padding: 2px 0 0 3px; overflow: hidden; }
  .row > .rh { border-right: 1px solid #c0c0c0; border-bottom-color: #c0c0c0; background: #f8f9fa; color: #5f6368; padding: 1px 0 0 10px; font-size: 11px; }
  .row > .rh.sel { background: #e8eaed; }
  .row > div:last-child { border-right: 0; }
  .row.hdr { height: 22px; }
  .row.hdr > div { background: #f8f9fa; border-color: #c0c0c0; text-align: center; padding: 3px 0 0; color: #5f6368; font-size: 10.500px; }
  .row.hdr > .sel { background: #e8eaed; }
  .row.hdr > .rh { border-right: 3px solid #bdbdbd; }
  .row.one { height: 18px; }
  .row.one > div { border-bottom: 0; padding-top: 1px; }
  .row.one > .rh { padding-left: 17px; }
  .freeze { height: 5px; background: #dadfe8; }
  .freeze i { display: block; width: 41px; height: 4px; background: #bcbcbc; }
  .row > .cell.picked { border-bottom: 2px solid #1a73e8; border-left: 1px solid #1a73e8; padding-left: 3px; }
  .vscroll { display: flex; flex-direction: column; align-items: center; background: #efefef; border-left: 1px solid #e0e0e0; }
  .vtop { width: 15px; height: 40px; background: #f8f8f8; }
  .vfreeze { width: 15px; height: 4px; background: #d5dae3; margin-bottom: 15px; }
  .vthumb { width: 13px; height: 13px; margin-top: 131px; background: #c6c6c6; }
  .down { margin-top: auto; margin-bottom: 15px; }
  .hscroll { display: flex; align-items: center; background: #efefef; }
  .corner { width: 41px; height: 15px; margin-right: 15px; background: #f8f8f8; border-right: 1px solid #ccc; }
  .hthumb { width: 1094px; height: 14px; margin-left: 7px; align-self: flex-start; background: #cbcbcb; }
  .corner2 { width: 16px; height: 15px; margin: 0 0 0 15px; background: #f8f8f8; border: 1px solid #ddd; }
  .sheettabs { display: flex; align-items: center; height: 36px; padding-left: 45px; background: #f1f3f4; border-top: 1px solid #e4e6e8; border-bottom: 1px solid #eee; font: 500 13px/16px Roboto, sans-serif; color: #188038; }
  .sheettabs > svg { margin: 0 17px 3px 0; }
  .stab { width: 87px; height: 34px; margin-left: 3px; padding: 0 0 3px 14px; display: flex; align-items: center; gap: 7px; background: #fff; border: 1px solid #e0e2e5; border-width: 0 1px; }
  .explore { width: 95px; height: 34px; padding-left: 10px; display: flex; align-items: center; gap: 13px; background: #fbfdfd; border-left: 1px solid #c0c0c0; color: #0f9d58; font-weight: 400; }
</style>
